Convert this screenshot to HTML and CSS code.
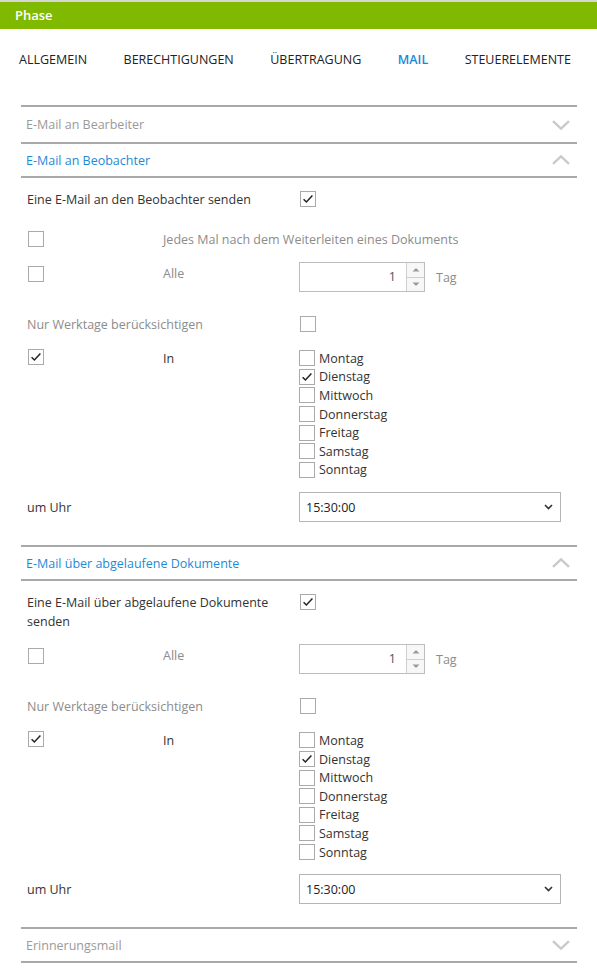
FILE: index.html
```html
<!DOCTYPE html>
<html>
<head>
	<title>Phase | Mail</title>
	<meta charset="utf-8">
	<link rel="stylesheet" href="styles.css">
</head>

<body>

<div id="phase-title">Phase</div>

<ul id="phase-tabs">
	<li>Allgemein</li>
	<li>Berechtigungen</li>
	<li>Übertragung</li>
	<li class="active">Mail</li>
	<li>Steuerelemente</li>
</ul>

<div id="mail-panel">

	<div class="group group-first">
		<div class="group-head">
			<span>E-Mail an Bearbeiter</span>
			<svg class="chevron" width="18" height="10" viewBox="0 0 18 10"><path d="M1 1.2 L9 8.6 L17 1.2"/></svg>
		</div>
	</div>

	<div class="group open">
		<div class="group-head">
			<span>E-Mail an Beobachter</span>
			<svg class="chevron" width="18" height="10" viewBox="0 0 18 10"><path d="M1 8.8 L9 1.4 L17 8.8"/></svg>
		</div>
		<div class="group-body">
			<div class="row">
				<label class="span2">Eine E-Mail an den Beobachter senden</label>
				<span class="check"><svg width="14" height="14" viewBox="0 0 14 14"><path d="M2.6 7.2 L5.4 10 L11.4 3.6"/></svg></span>
			</div>
			<div class="row">
				<span class="check"></span>
				<label class="span2 muted">Jedes Mal nach dem Weiterleiten eines Dokuments</label>
			</div>
			<div class="row row-top row-spin">
				<span class="check"></span>
				<label class="muted">Alle</label>
				<div class="spin-line">
					<div class="spinner">
						<span class="spin-value">1</span>
						<span class="spin-buttons">
							<span><svg width="8" height="5" viewBox="0 0 8 5"><path d="M0.5 4.5 L4 1 L7.5 4.5 Z"/></svg></span>
							<span><svg width="8" height="5" viewBox="0 0 8 5"><path d="M0.5 0.5 L4 4 L7.5 0.5 Z"/></svg></span>
						</span>
					</div>
					<label class="muted">Tag</label>
				</div>
			</div>
			<div class="row">
				<label class="span2 muted">Nur Werktage berücksichtigen</label>
				<span class="check"></span>
			</div>
			<div class="row row-top row-days">
				<span class="check"><svg width="14" height="14" viewBox="0 0 14 14"><path d="M2.6 7.2 L5.4 10 L11.4 3.6"/></svg></span>
				<label>In</label>
				<ul class="days">
					<li><span class="check"></span>Montag</li>
					<li><span class="check"><svg width="14" height="14" viewBox="0 0 14 14"><path d="M2.6 7.2 L5.4 10 L11.4 3.6"/></svg></span>Dienstag</li>
					<li><span class="check"></span>Mittwoch</li>
					<li><span class="check"></span>Donnerstag</li>
					<li><span class="check"></span>Freitag</li>
					<li><span class="check"></span>Samstag</li>
					<li><span class="check"></span>Sonntag</li>
				</ul>
			</div>
			<div class="row">
				<label class="span2">um Uhr</label>
				<div class="select">
					<span>15:30:00</span>
					<svg width="9" height="6" viewBox="0 0 9 6"><path d="M1 1 L4.5 4.6 L8 1"/></svg>
				</div>
			</div>
		</div>
	</div>

	<div class="group open">
		<div class="group-head">
			<span>E-Mail über abgelaufene Dokumente</span>
			<svg class="chevron" width="18" height="10" viewBox="0 0 18 10"><path d="M1 8.8 L9 1.4 L17 8.8"/></svg>
		</div>
		<div class="group-body">
			<div class="row row-top row-multi">
				<label class="span2">Eine E-Mail über abgelaufene Dokumente senden</label>
				<span class="check"><svg width="14" height="14" viewBox="0 0 14 14"><path d="M2.6 7.2 L5.4 10 L11.4 3.6"/></svg></span>
			</div>
			<div class="row row-top row-spin">
				<span class="check"></span>
				<label class="muted">Alle</label>
				<div class="spin-line">
					<div class="spinner">
						<span class="spin-value">1</span>
						<span class="spin-buttons">
							<span><svg width="8" height="5" viewBox="0 0 8 5"><path d="M0.5 4.5 L4 1 L7.5 4.5 Z"/></svg></span>
							<span><svg width="8" height="5" viewBox="0 0 8 5"><path d="M0.5 0.5 L4 4 L7.5 0.5 Z"/></svg></span>
						</span>
					</div>
					<label class="muted">Tag</label>
				</div>
			</div>
			<div class="row">
				<label class="span2 muted">Nur Werktage berücksichtigen</label>
				<span class="check"></span>
			</div>
			<div class="row row-top row-days">
				<span class="check"><svg width="14" height="14" viewBox="0 0 14 14"><path d="M2.6 7.2 L5.4 10 L11.4 3.6"/></svg></span>
				<label>In</label>
				<ul class="days">
					<li><span class="check"></span>Montag</li>
					<li><span class="check"><svg width="14" height="14" viewBox="0 0 14 14"><path d="M2.6 7.2 L5.4 10 L11.4 3.6"/></svg></span>Dienstag</li>
					<li><span class="check"></span>Mittwoch</li>
					<li><span class="check"></span>Donnerstag</li>
					<li><span class="check"></span>Freitag</li>
					<li><span class="check"></span>Samstag</li>
					<li><span class="check"></span>Sonntag</li>
				</ul>
			</div>
			<div class="row">
				<label class="span2">um Uhr</label>
				<div class="select">
					<span>15:30:00</span>
					<svg width="9" height="6" viewBox="0 0 9 6"><path d="M1 1 L4.5 4.6 L8 1"/></svg>
				</div>
			</div>
		</div>
	</div>

	<div class="group">
		<div class="group-head">
			<span>Erinnerungsmail</span>
			<svg class="chevron" width="18" height="10" viewBox="0 0 18 10"><path d="M1 1.2 L9 8.6 L17 1.2"/></svg>
		</div>
	</div>

</div>

</body>
</html>
```

FILE: styles.css
```css
body {
	margin: 0;
	background: #fff;
	color: #333;
	font-family: "Segoe UI", "Open Sans", "Noto Sans", sans-serif;
	font-size: 12.5px;
}
ul, li {
	margin: 0;
	padding: 0;
	list-style: none;
}

#phase-title {
	height: 27px;
	padding-left: 15px;
	line-height: 27px;
	color: #fff;
	font-weight: 600;
	font-size: 13px;
	background: #7fba00;
	border-top: 2px solid #d6d6d6;
}

#phase-tabs {
	display: flex;
	justify-content: space-between;
	padding: 22px 26px 0 19px;
	margin-bottom: 36px;
	line-height: 18px;
	font-size: 12.5px;
	color: #222;
	text-transform: uppercase;
}
#phase-tabs .active {
	color: #1a88d4;
	font-weight: 600;
}

#mail-panel {
	width: 556px;
	margin-left: 21px;
	border-bottom: 2px solid #a9a9a9;
}
.group {
	border-top: 2px solid #a9a9a9;
}
.group-head {
	display: flex;
	justify-content: space-between;
	align-items: center;
	height: 32px;
	padding: 0 7px 0 5px;
	color: #9a9a9a;
	font-size: 12.5px;
}
.group-first .group-head {
	height: 35px;
}
.group.open .group-head {
	color: #1e8ad6;
	border-bottom: 2px solid #a9a9a9;
}
.chevron path {
	fill: none;
	stroke: #cacaca;
	stroke-width: 2.4;
}

.group-body {
	padding: 1px 6px 18px 6px;
}
.row {
	display: grid;
	grid-template-columns: 136px 136px 1fr;
	align-items: center;
	height: 40px;
	line-height: 19px;
}
.row-top {
	align-items: start;
}
.row .span2 {
	grid-column: span 2;
}
.row-spin {
	height: 45px;
	padding-top: 3px;
	box-sizing: border-box;
}
.row-spin > .check {
	margin-top: 4px;
}
.row-spin > label {
	margin-top: 2px;
}
.row-days {
	height: auto;
	padding: 5px 0 8px;
}
.row-multi {
	height: auto;
	padding: 11px 0 10px;
}
.row-multi .check {
	margin-top: 1px;
}
.muted {
	color: #8c8c8c;
}

.check {
	display: inline-flex;
	align-items: center;
	justify-content: center;
	width: 14px;
	height: 14px;
	border: 1px solid #aaa;
	background: #fff;
	margin-left: 1px;
}
.check path {
	fill: none;
	stroke: #222;
	stroke-width: 1.5;
}

.days li {
	display: flex;
	align-items: center;
	height: 18.6px;
}
.days .check {
	margin: 0 4px 0 0;
}

.spin-line {
	display: flex;
	align-items: center;
	gap: 11px;
}
.spinner {
	display: flex;
	width: 124px;
	height: 28px;
	border: 1px solid #bdbdbd;
}
.spin-value {
	flex: 1;
	padding-right: 10px;
	text-align: right;
	line-height: 28px;
	color: #555;
}
.spin-buttons {
	display: flex;
	flex-direction: column;
	width: 17px;
	border-left: 1px solid #cfcfcf;
}
.spin-buttons span {
	display: flex;
	flex: 1;
	align-items: center;
	justify-content: center;
	background: #f7f7f7;
}
.spin-buttons span + span {
	border-top: 1px solid #cfcfcf;
}
.spin-buttons path {
	fill: #9a9a9a;
}

.select {
	display: flex;
	justify-content: space-between;
	align-items: center;
	box-sizing: border-box;
	width: 262px;
	height: 30px;
	padding: 0 7px 0 6px;
	border: 1px solid #b5b5b5;
	color: #222;
}
.select path {
	fill: none;
	stroke: #333;
	stroke-width: 1.6;
}
```
